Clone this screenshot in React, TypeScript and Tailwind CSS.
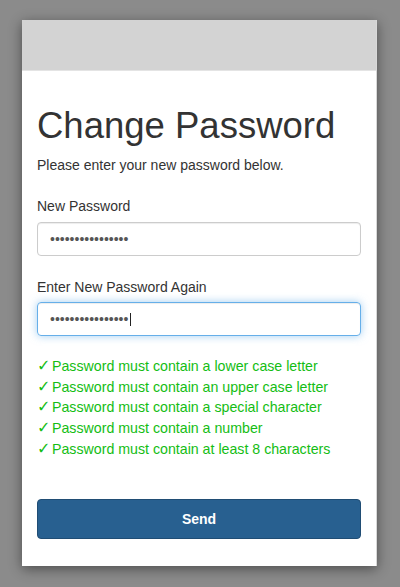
const RULES = [
  "Password must contain a lower case letter",
  "Password must contain an upper case letter",
  "Password must contain a special character",
  "Password must contain a number",
  "Password must contain at least 8 characters",
];

const FONT = "font-['Liberation_Sans','Helvetica_Neue',Arial,sans-serif]";

export default function App() {
  return (
    <div className={`min-h-screen bg-[#8b8b8b] pt-[20px] ${FONT} text-[14px] text-[#333]`}>
      <div className="ml-[22px] w-[355px] border-r border-[#d8d8d8] bg-white shadow-[0_3px_12px_rgba(0,0,0,0.45)]">
        <div className="h-[51px] border-b border-[#e4e4e4] bg-[#d3d3d3]" />

        <div className="px-[15px] pb-[27px]">
          <h1 className="mt-[36px] text-[36.5px] leading-[38px] font-normal">Change Password</h1>
          <p className="mt-[10px] leading-[20px]">Please enter your new password below.</p>

          <label className="mt-[21px] block leading-[20px]">New Password</label>
          <input
            type="password"
            readOnly
            defaultValue="abcdefghijklmnop"
            className="mt-[6px] block h-[34px] w-full rounded-[4px] border border-[#ccc] px-[12px] text-[14px] text-[#555] shadow-[inset_0_1px_1px_rgba(0,0,0,0.075)] outline-none"
          />

          <label className="mt-[21px] block leading-[20px]">Enter New Password Again</label>
          <div className="relative mt-[5px]">
            <input
              type="password"
              readOnly
              defaultValue="abcdefghijklmnop"
              className="block h-[34px] w-full rounded-[4px] border border-[#66afe9] px-[12px] text-[14px] text-[#555] shadow-[inset_0_1px_1px_rgba(0,0,0,0.075),0_0_8px_rgba(102,175,233,0.6)] outline-none"
            />
            <span className="pointer-events-none absolute top-[11px] left-[93px] h-[13px] w-px bg-[#222]" />
          </div>

          <ul className="mt-[20px] text-[14.2px] leading-[20.7px] text-[#14bd14]">
            {RULES.map((r) => (
              <li key={r} className="h-[20.7px]">
                <span className="inline-block w-[15px] font-['DejaVu_Sans',sans-serif] text-[16px] leading-none">✓</span>
                {r}
              </li>
            ))}
          </ul>

          <button
            type="button"
            className="mt-[40px] block h-[40px] w-full rounded-[4px] border border-[#204d74] bg-[#286090] text-[14px] font-bold text-white"
          >
            Send
          </button>
        </div>
      </div>
    </div>
  );
}
